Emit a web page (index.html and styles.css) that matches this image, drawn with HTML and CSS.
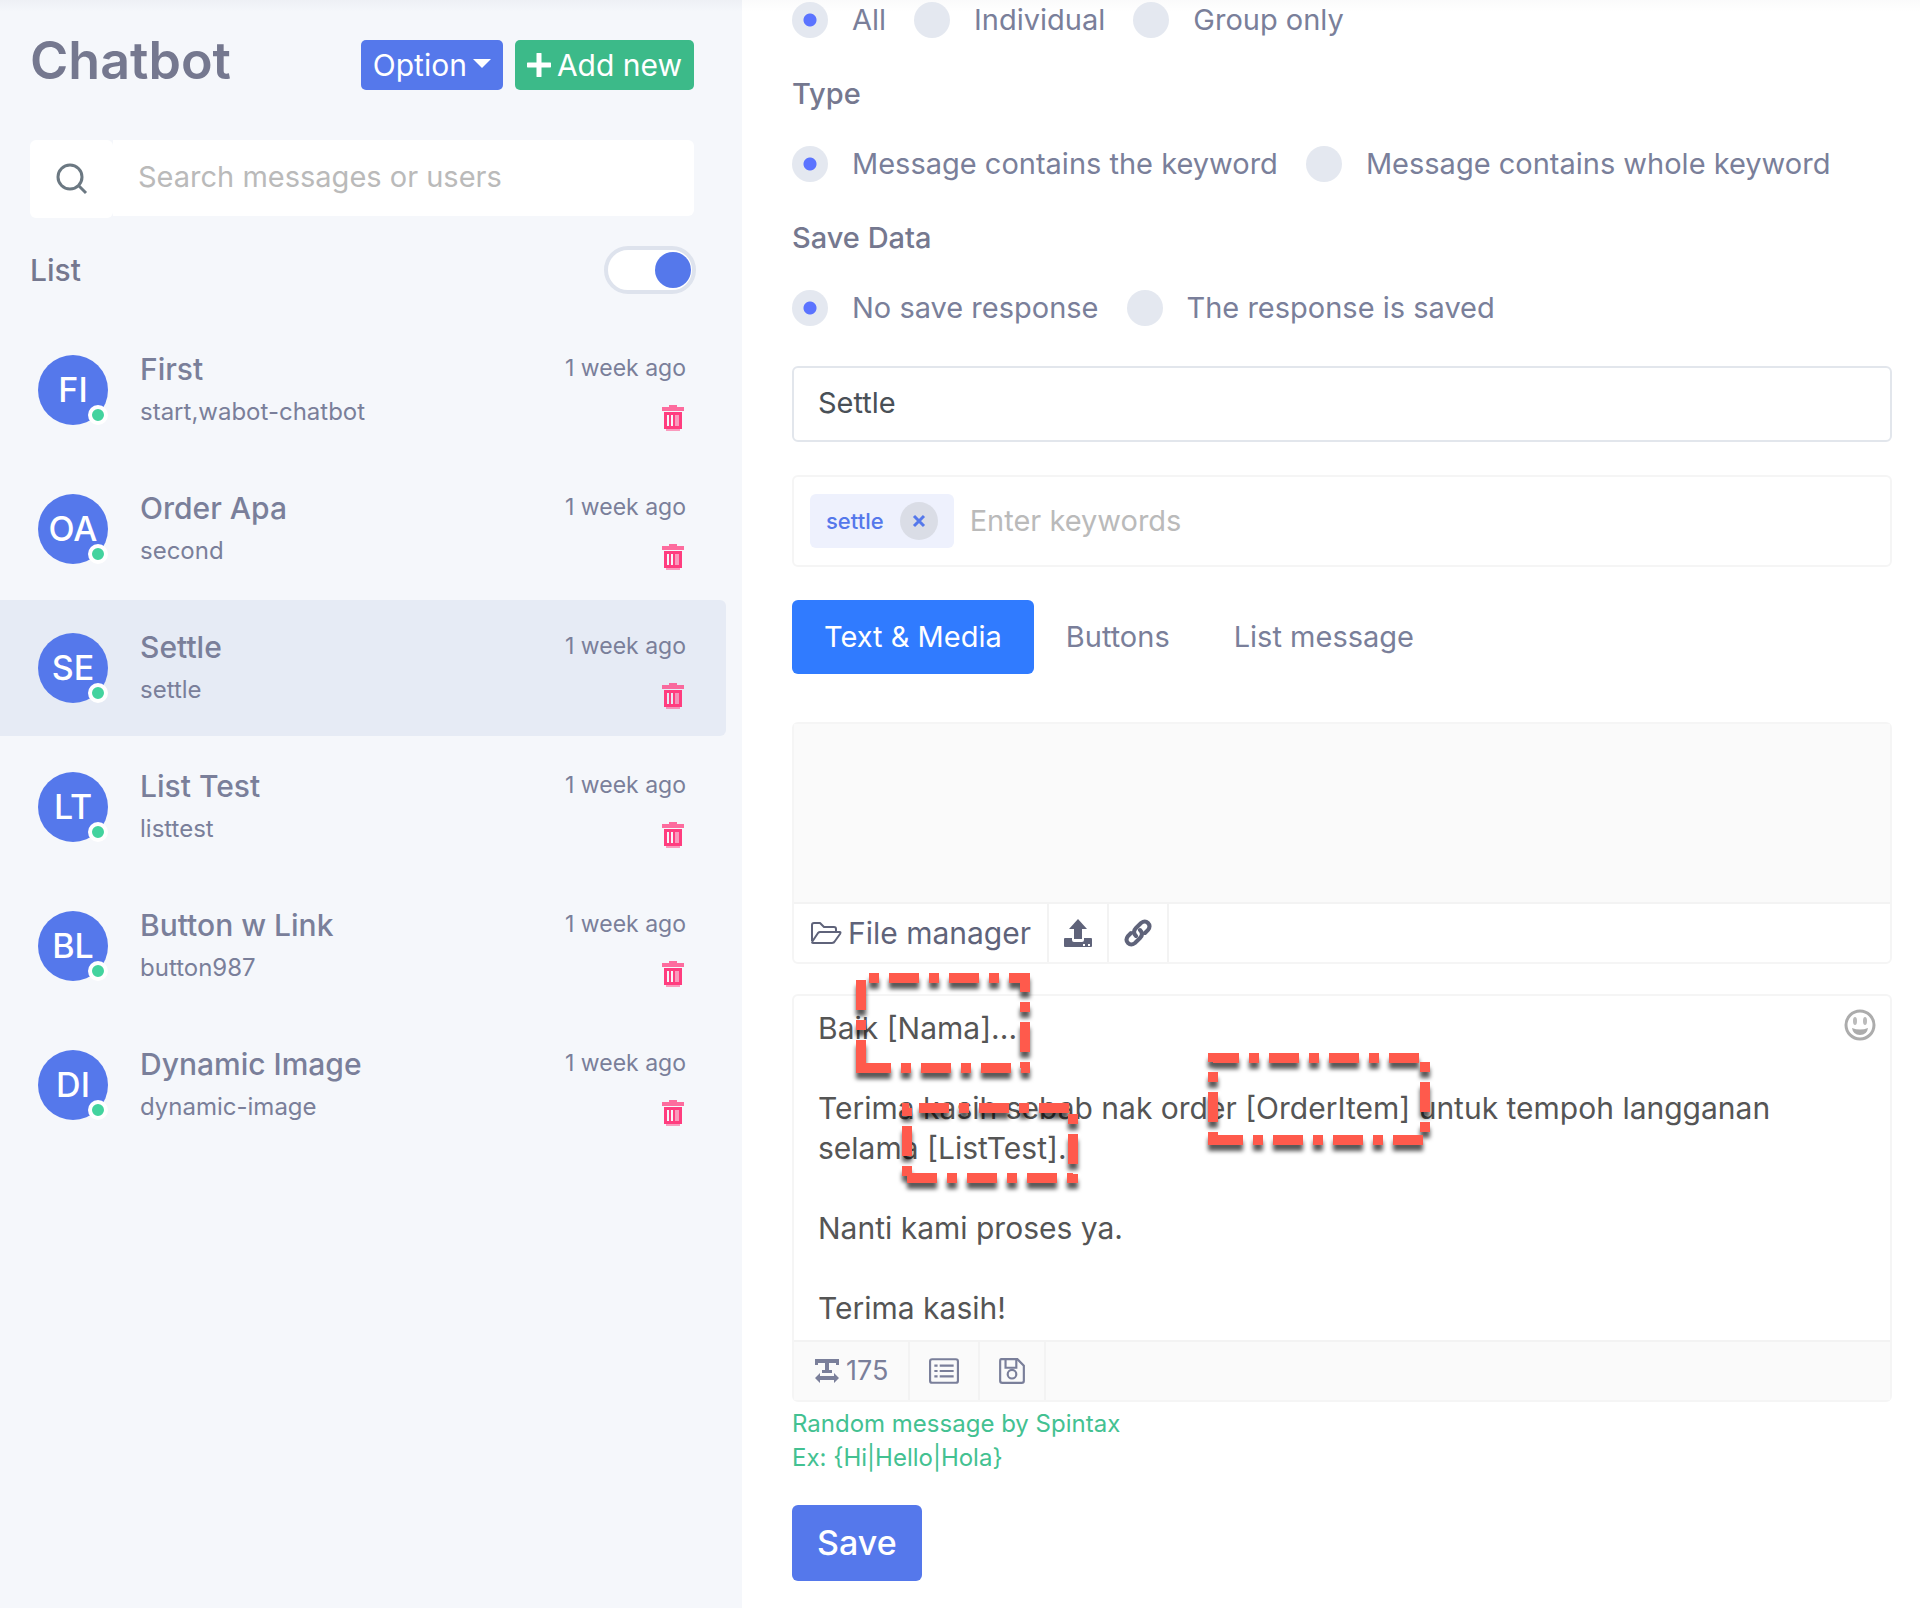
FILE: index.html
```html
<!DOCTYPE html>
<html lang="en">
<head>
    <meta charset="UTF-8">
    <meta name="viewport" content="width=device-width, initial-scale=1.0">
    <title>Chatbot</title>
    <link rel="stylesheet" href="styles.css">
</head>
<body>
    <!-- shared icons -->
    <svg class="sprite" aria-hidden="true">
        <symbol id="icon-trash" viewBox="0 0 22 26">
            <path d="M7 2V0h8v2h7v4H0V2z" opacity=".75"/>
            <path fill-rule="evenodd" d="M2 7h18v17H2zM5 10v11h2V10zM9 10v11h2V10zM13 10v11h4V10z"/>
            <path d="M13 10h4v11h-4zM4 24h14v2H4z" opacity=".5"/>
        </symbol>
    </svg>

    <div class="layout">
        <aside class="sidebar">
            <div class="sidebar-header">
                <h1>Chatbot</h1>
                <div class="header-buttons">
                    <button class="btn btn-option" type="button">Option <span class="caret"></span></button>
                    <button class="btn btn-add" type="button">
                        <svg width="24" height="24" viewBox="0 0 24 24"><path d="M12 1v22M1 12h22" stroke="currentColor" stroke-width="5" stroke-linecap="round"/></svg>
                        Add new
                    </button>
                </div>
            </div>

            <div class="search">
                <label class="search-icon" for="search">
                    <svg width="32" height="32" viewBox="0 0 32 32" fill="none" stroke="#6b7882" stroke-width="3"><circle cx="14" cy="14" r="12"/><path d="M22 22l8 8"/></svg>
                </label>
                <input id="search" class="search-input" type="text" placeholder="Search messages or users" aria-label="Search messages or users">
            </div>

            <div class="list-header">
                <label for="listToggle">List</label>
                <input id="listToggle" class="toggle" type="checkbox" checked>
            </div>

            <ul class="chat-list">
                <li class="chat-item">
                    <div class="avatar">FI<span class="status"></span></div>
                    <div class="chat-text"><h2>First</h2><p>start,wabot-chatbot</p></div>
                    <div class="chat-side">
                        <span class="time">1 week ago</span>
                        <button class="trash" type="button" aria-label="Delete"><svg width="22" height="26"><use href="#icon-trash"/></svg></button>
                    </div>
                </li>
                <li class="chat-item">
                    <div class="avatar">OA<span class="status"></span></div>
                    <div class="chat-text"><h2>Order Apa</h2><p>second</p></div>
                    <div class="chat-side">
                        <span class="time">1 week ago</span>
                        <button class="trash" type="button" aria-label="Delete"><svg width="22" height="26"><use href="#icon-trash"/></svg></button>
                    </div>
                </li>
                <li class="chat-item active">
                    <div class="avatar">SE<span class="status"></span></div>
                    <div class="chat-text"><h2>Settle</h2><p>settle</p></div>
                    <div class="chat-side">
                        <span class="time">1 week ago</span>
                        <button class="trash" type="button" aria-label="Delete"><svg width="22" height="26"><use href="#icon-trash"/></svg></button>
                    </div>
                </li>
                <li class="chat-item">
                    <div class="avatar">LT<span class="status"></span></div>
                    <div class="chat-text"><h2>List Test</h2><p>listtest</p></div>
                    <div class="chat-side">
                        <span class="time">1 week ago</span>
                        <button class="trash" type="button" aria-label="Delete"><svg width="22" height="26"><use href="#icon-trash"/></svg></button>
                    </div>
                </li>
                <li class="chat-item">
                    <div class="avatar">BL<span class="status"></span></div>
                    <div class="chat-text"><h2>Button w Link</h2><p>button987</p></div>
                    <div class="chat-side">
                        <span class="time">1 week ago</span>
                        <button class="trash" type="button" aria-label="Delete"><svg width="22" height="26"><use href="#icon-trash"/></svg></button>
                    </div>
                </li>
                <li class="chat-item">
                    <div class="avatar">DI<span class="status"></span></div>
                    <div class="chat-text"><h2>Dynamic Image</h2><p>dynamic-image</p></div>
                    <div class="chat-side">
                        <span class="time">1 week ago</span>
                        <button class="trash" type="button" aria-label="Delete"><svg width="22" height="26"><use href="#icon-trash"/></svg></button>
                    </div>
                </li>
            </ul>
        </aside>

        <main class="content">
            <form>
                <div class="radio-row">
                    <label><input type="radio" name="send_to" checked>All</label>
                    <label><input type="radio" name="send_to">Individual</label>
                    <label><input type="radio" name="send_to">Group only</label>
                </div>

                <h3>Type</h3>
                <div class="radio-row">
                    <label><input type="radio" name="type" checked>Message contains the keyword</label>
                    <label><input type="radio" name="type">Message contains whole keyword</label>
                </div>

                <h3>Save Data</h3>
                <div class="radio-row">
                    <label><input type="radio" name="save_data" checked>No save response</label>
                    <label><input type="radio" name="save_data">The response is saved</label>
                </div>

                <input class="name-input" type="text" value="Settle" aria-label="Name">

                <div class="keywords">
                    <span class="chip">settle
                        <button type="button" aria-label="Remove settle"><svg width="14" height="14" viewBox="0 0 14 14"><path d="M2 2l10 10M12 2L2 12" stroke="currentColor" stroke-width="3"/></svg></button>
                    </span>
                    <input type="text" placeholder="Enter keywords" aria-label="Enter keywords">
                </div>

                <div class="tabs">
                    <button class="tab active" type="button">Text &amp; Media</button>
                    <button class="tab" type="button">Buttons</button>
                    <button class="tab" type="button">List message</button>
                </div>

                <div class="media-box">
                    <div class="media-preview"></div>
                    <div class="toolbar">
                        <button class="tool tool-file" type="button">
                            <svg width="32" height="24" viewBox="0 0 32 24" fill="none" stroke="currentColor" stroke-width="2" stroke-linejoin="round"><path d="M2 20V4q0-2 2-2h6l4 4h10q2 0 2 2v3M2 21L8 12q1-1 2-1h20q1 0 0 2l-5 7q-1 2-3 2H3q-1 0-1-1"/></svg>
                            File manager
                        </button>
                        <button class="tool tool-icon" type="button" aria-label="Upload">
                            <svg width="30" height="30" viewBox="0 0 30 30" fill="currentColor"><path d="M15 1l9 10h-5v10h-8V11H6z"/><path fill-rule="evenodd" d="M2 20h7v2q0 2 2 2h8q2 0 2-2v-2h7q1 0 1 1v7q0 1-1 1H2q-1 0-1-1v-7q0-1 1-1zM20 26v2h2v-2zM25 26v2h2v-2z"/></svg>
                        </button>
                        <button class="tool tool-icon" type="button" aria-label="Link">
                            <svg width="28" height="28" viewBox="0 0 28 28" fill="none" stroke="currentColor" stroke-width="4" stroke-linecap="round"><path d="M12 17q-4-4 0-8l5-5q4-3 7 0t0 7l-3 3"/><path d="M16 11q4 4 0 8l-5 5q-4 3-7 0t0-7l3-3"/></svg>
                        </button>
                    </div>
                </div>

                <div class="message-box">
                    <textarea class="message-text" aria-label="Message" spellcheck="false">Baik [Nama]...

Terima kasih sebab nak order [OrderItem] untuk tempoh langganan selama [ListTest].

Nanti kami proses ya.

Terima kasih!</textarea>
                    <button class="emoji" type="button" aria-label="Emoji">
                        <svg width="32" height="32" viewBox="0 0 32 32"><circle cx="16" cy="16" r="14" fill="none" stroke="#acacac" stroke-width="3"/><ellipse cx="11" cy="12" rx="2" ry="4" fill="#bbb"/><ellipse cx="21" cy="12" rx="2" ry="4" fill="#bbb"/><path d="M8 19q8 3 16 0-1 7-8 7t-8-7z" fill="#acacac"/></svg>
                    </button>
                    <!-- dashed highlights around the placeholders -->
                    <svg class="marks" width="700" height="200">
                        <path d="M67 72H231V-18H67Z"/>
                        <path d="M419 144H631V62H419Z"/>
                        <path d="M113 182H279V112H113Z"/>
                    </svg>
                    <div class="toolbar toolbar-gray">
                        <span class="tool tool-count">
                            <svg width="26" height="26" viewBox="0 0 26 26" fill="currentColor"><path d="M1 1h24v6h-3V5h-7v7h3v3H8v-3h3V5H4v2H1z"/><path d="M1 20l5-5v3h14v-3l5 5-5 5v-3H6v3z"/></svg>
                            175
                        </span>
                        <button class="tool tool-list" type="button" aria-label="Templates">
                            <svg width="30" height="28" viewBox="0 0 28 26" fill="none" stroke="currentColor"><rect x="1" y="2" width="26" height="22" rx="2" stroke-width="2"/><path d="M5 8h3M5 13h3M5 18h3M10 8h13M10 13h13M10 18h13" stroke-width="2"/></svg>
                        </button>
                        <button class="tool tool-disk" type="button" aria-label="Save template">
                            <svg width="28" height="28" viewBox="0 0 26 26" fill="none" stroke="currentColor" stroke-width="2"><path d="M3 2h15l6 6v14q0 2-2 2H4q-2 0-2-2V4q0-2 1-2z"/><path d="M7 2v8h10V2"/><circle cx="13" cy="16" r="4"/></svg>
                        </button>
                    </div>
                </div>
                <p class="hint">Random message by Spintax<br>Ex: {Hi|Hello|Hola}</p>

                <button class="btn-save" type="button">Save</button>
            </form>
        </main>
    </div>
</body>
</html>
```
FILE: styles.css
```css
* {
    box-sizing: border-box;
}
body {
    margin: 0;
    font-family: Inter, 'Open Sans', sans-serif;
    font-size: 29px;
    line-height: 40px;
    color: #7a7f9a;
    background-color: #fff;
}
h1, h2, h3, p, ul {
    margin: 0;
    padding: 0;
}
button, input, textarea {
    font: inherit;
    color: inherit;
    border: none;
    outline: none;
    padding: 0;
    margin: 0;
    background: none;
}
button {
    cursor: pointer;
}
input::placeholder {
    color: #bababa;
    opacity: 1;
}
svg {
    display: block;
    flex-shrink: 0;
}
.sprite {
    position: absolute;
    width: 0;
    height: 0;
}
.layout {
    display: grid;
    grid-template-columns: 742px 1fr;
    min-height: 100vh;
    background-image: linear-gradient(rgba(15, 34, 58, 0.02), transparent 12px);
}

/* sidebar */
.sidebar {
    background-color: #f5f7fb;
    background-image: linear-gradient(rgba(15, 34, 58, 0.03), transparent 12px);
}
.sidebar-header {
    display: flex;
    justify-content: space-between;
    align-items: flex-end;
    padding: 36px 48px 0 30px;
}
h1 {
    font-size: 52px;
    line-height: 50px;
    font-weight: 600;
    color: #75788f;
    padding-bottom: 4px;
}
.header-buttons {
    display: flex;
    gap: 12px;
}
.btn {
    display: flex;
    align-items: center;
    height: 50px;
    border-radius: 5px;
    color: #fff;
    font-size: 30px;
    gap: 6px;
    padding: 0 12px;
    white-space: nowrap;
}
.btn-option {
    background-color: #5578eb;
}
.btn-add {
    background-color: #3cba89;
}
.caret {
    border: 9px solid transparent;
    border-top-color: #fff;
    border-bottom: none;
    margin-bottom: 4px;
}
.search {
    display: flex;
    align-items: flex-start;
    padding: 50px 48px 0 30px;
}
.search-icon {
    display: flex;
    align-items: center;
    justify-content: center;
    width: 83px;
    height: 78px;
    background-color: #fff;
    border-radius: 6px;
}
.search-input {
    flex: 1;
    min-width: 0;
    height: 76px;
    padding: 0 25px 4px;
    background-color: #fff;
    border-radius: 0 6px 6px 0;
}
.list-header {
    display: flex;
    justify-content: space-between;
    align-items: center;
    padding: 28px 46px 0 30px;
    font-size: 30px;
    font-weight: 500;
    color: #75788f;
}
.toggle {
    appearance: none;
    display: flex;
    justify-content: flex-end;
    align-items: center;
    width: 92px;
    height: 48px;
    padding: 0 1px;
    border: 4px solid #dee3ed;
    border-radius: 24px;
    background-color: #fff;
}
.toggle::before {
    content: "";
    width: 36px;
    height: 36px;
    border-radius: 50%;
    background-color: #5578eb;
}
.toggle:not(:checked) {
    justify-content: flex-start;
}
.chat-list {
    display: flex;
    flex-direction: column;
    gap: 3px;
    margin: 28px 16px 0 0;
    list-style: none;
}
.chat-item {
    display: flex;
    align-items: center;
    height: 136px;
    padding: 0 40px 0 38px;
    border-radius: 0 6px 6px 0;
}
.chat-item.active {
    background-color: #e6ebf5;
}
.avatar {
    position: relative;
    display: flex;
    align-items: center;
    justify-content: center;
    width: 70px;
    height: 70px;
    margin-right: 32px;
    border-radius: 50%;
    background-color: #5578eb;
    color: #fff;
    font-size: 34px;
    font-weight: 500;
}
.status {
    position: absolute;
    right: 0;
    bottom: 0;
    width: 20px;
    height: 20px;
    border: 4px solid #fff;
    border-radius: 50%;
    background-color: #43d39e;
}
.chat-text {
    flex: 1;
}
h2 {
    font-size: 30px;
    line-height: 40px;
    font-weight: 500;
}
.chat-text p {
    font-size: 24px;
    line-height: 34px;
    padding: 6px 0 2px;
}
.chat-side {
    display: flex;
    flex-direction: column;
    align-items: flex-end;
    gap: 20px;
    padding-top: 2px;
}
.time {
    font-size: 23px;
    line-height: 34px;
}
.trash {
    color: #ff3d7f;
    fill: currentColor;
    padding-right: 2px;
}

/* form */
.content {
    min-width: 0;
    padding: 0 28px 26px 50px;
}
.radio-row {
    display: flex;
    gap: 28px;
}
.radio-row label {
    display: flex;
    align-items: center;
    gap: 24px;
    white-space: nowrap;
}
.radio-row input {
    appearance: none;
    width: 36px;
    height: 36px;
    border-radius: 50%;
    background-color: #e4e8f0;
}
.radio-row input:checked {
    background-image: radial-gradient(circle, #5b73ff 6px, transparent 7px);
}
h3 {
    font-size: 29px;
    line-height: 40px;
    font-weight: 500;
    color: #75788f;
    margin: 34px 0 30px;
}
.name-input {
    display: block;
    width: 100%;
    height: 76px;
    margin-top: 38px;
    padding: 0 24px 4px;
    border: 2px solid #e2e6ec;
    border-radius: 6px;
    color: #495057;
}
.keywords {
    display: flex;
    align-items: center;
    gap: 16px;
    height: 92px;
    margin-top: 33px;
    padding: 0 16px;
    border: 2px solid #f5f5f5;
    border-radius: 6px;
}
.keywords input {
    flex: 1;
    min-width: 0;
}
.chip {
    display: flex;
    align-items: center;
    gap: 16px;
    height: 54px;
    padding: 0 16px;
    border-radius: 6px;
    background-color: #eef1fd;
    color: #5578eb;
    font-size: 22px;
    font-weight: 500;
}
.chip button {
    display: flex;
    align-items: center;
    justify-content: center;
    width: 38px;
    height: 38px;
    border-radius: 50%;
    background-color: #dadde6;
}
.tabs {
    display: flex;
    margin-top: 33px;
}
.tab {
    height: 74px;
    padding: 0 32px;
    border-radius: 6px;
}
.tab.active {
    background-color: #307bff;
    color: #fff;
}
.media-box, .message-box {
    border: 2px solid #f5f5f5;
    border-radius: 6px;
}
.media-box {
    margin-top: 48px;
}
.media-preview {
    height: 178px;
    background-color: #fafafa;
}
.toolbar {
    display: flex;
    height: 60px;
    border-top: 2px solid #f3f3f3;
}
.toolbar-gray {
    background-color: #fafafa;
}
.tool {
    display: flex;
    align-items: center;
    justify-content: center;
    gap: 6px;
    border-right: 2px solid #f3f3f3;
}
.tool-file {
    padding: 0 16px;
    color: #5f637a;
    font-size: 30px;
}
.tool-icon {
    width: 60px;
    color: #5f637a;
}
.tool-count {
    padding: 0 20px;
    font-size: 27px;
}
.tool-list {
    width: 70px;
}
.tool-disk {
    width: 66px;
}
.message-box {
    position: relative;
    margin-top: 30px;
}
.message-text {
    display: block;
    width: 100%;
    height: 344px;
    padding: 12px 90px 12px 24px;
    font-size: 30px;
    line-height: 40px;
    color: #555;
    resize: none;
    overflow: hidden;
}
.emoji {
    position: absolute;
    top: 13px;
    right: 14px;
}
.marks {
    position: absolute;
    top: 0;
    left: 0;
    overflow: visible;
    pointer-events: none;
    fill: none;
    stroke: #ff5a4c;
    stroke-width: 10px;
    stroke-dasharray: 30 10 10 10;
    filter: drop-shadow(0 6px 2px rgba(0, 0, 0, 0.65));
}
.hint {
    margin-top: 5px;
    font-size: 24px;
    line-height: 34px;
    color: #43c191;
}
.btn-save {
    height: 76px;
    margin-top: 30px;
    padding: 0 25px;
    border-radius: 6px;
    background-color: #5578eb;
    color: #fff;
    font-size: 34px;
    font-weight: 500;
}
```
